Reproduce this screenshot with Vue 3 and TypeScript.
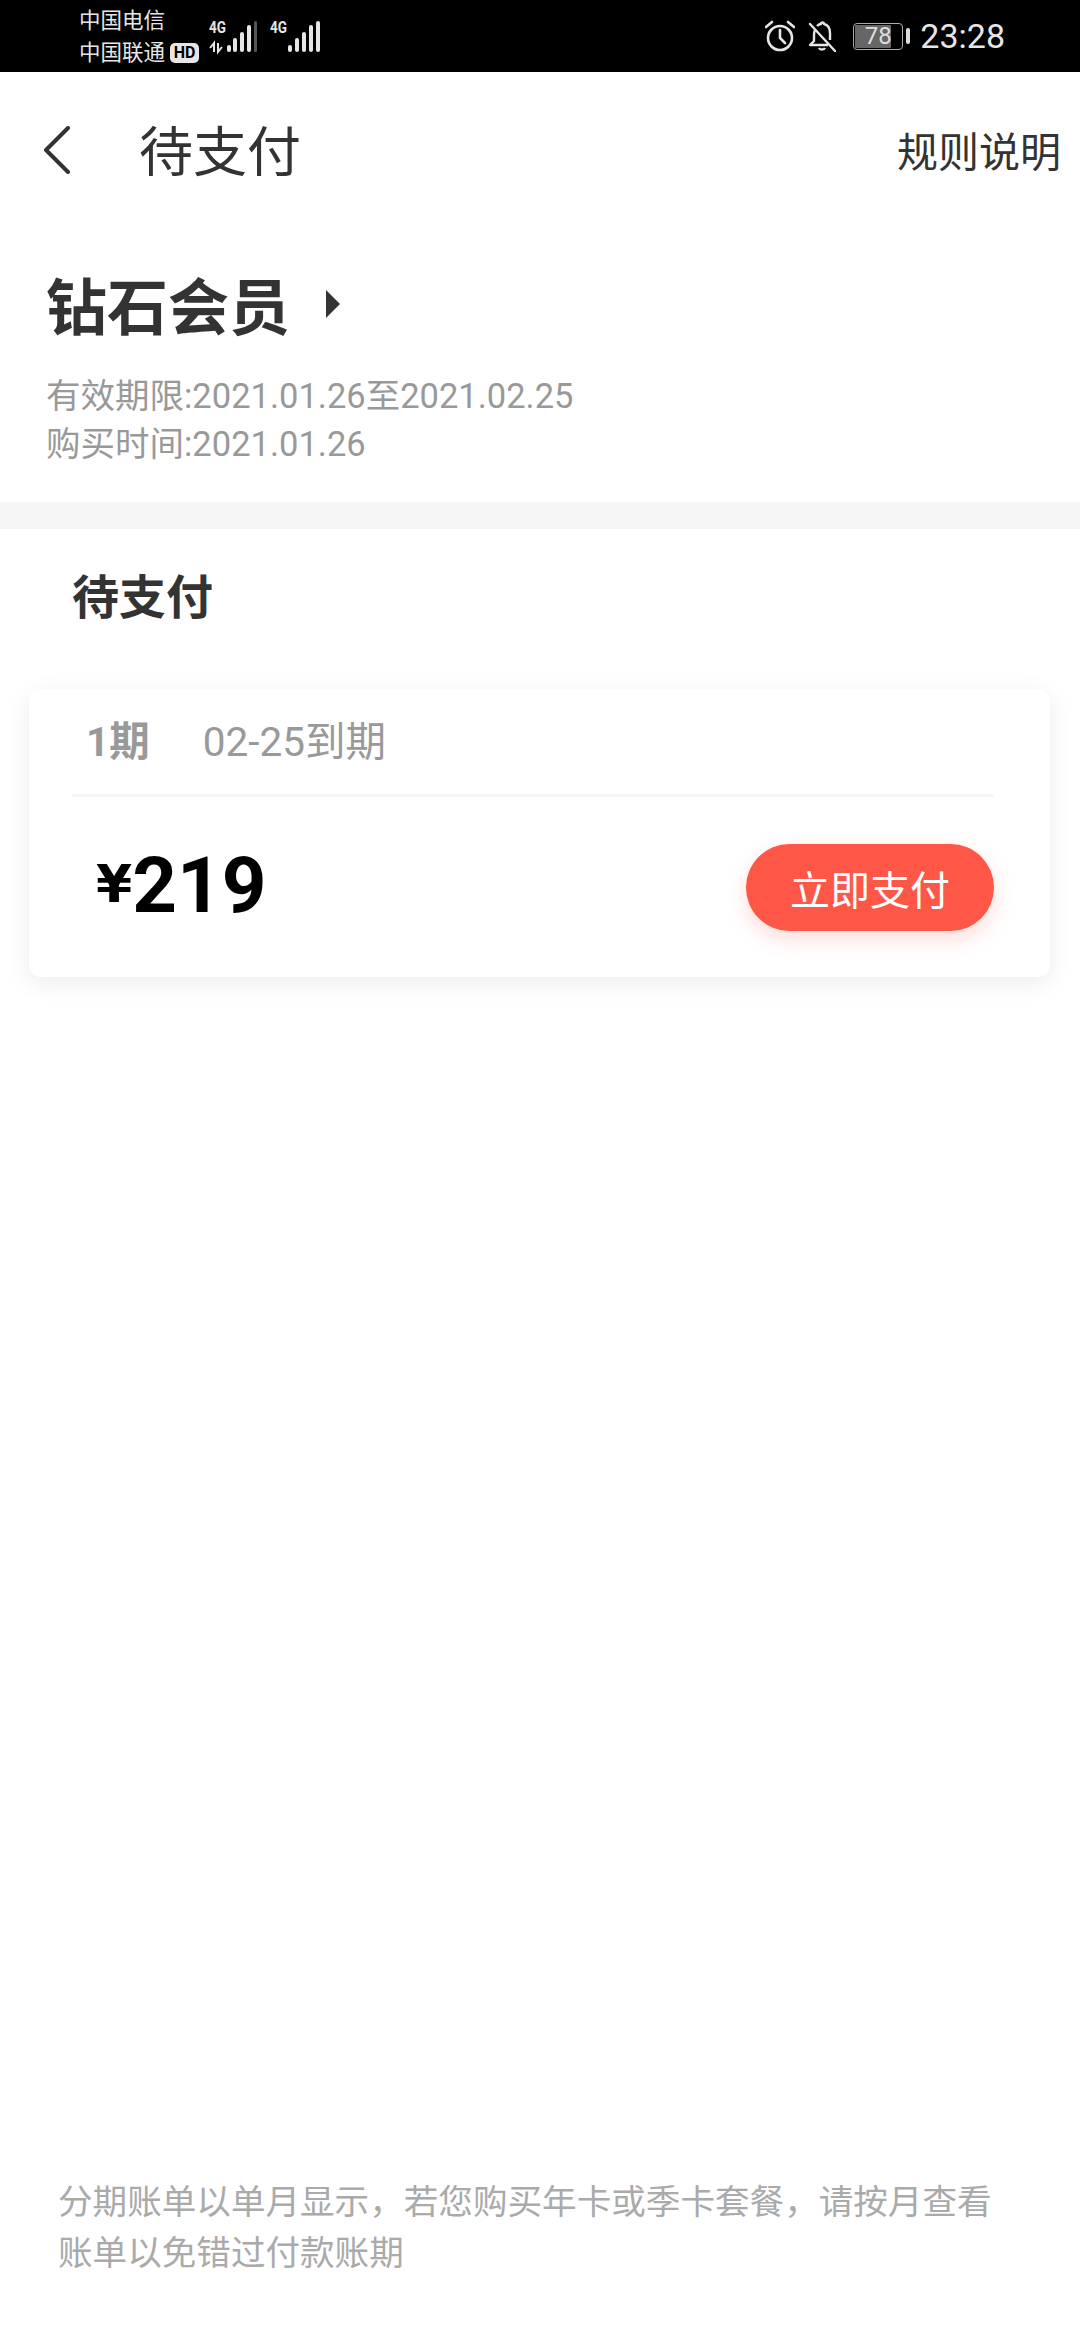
<template>
  <div class="page">
    <!-- Status bar -->
    <div class="status-bar">
      <div class="carriers">
        <span>中国电信</span>
        <span class="carrier-row">中国联通<em class="hd">HD</em></span>
      </div>
      <svg class="signal" width="48" height="44" viewBox="0 0 48 44">
        <text x="0" y="21" class="net" textLength="17" lengthAdjust="spacingAndGlyphs">4G</text>
        <path d="M5 40V31L1 36M9 31V40L13 35" class="arrows" />
        <rect x="18" y="33" width="4" height="7" rx="2" fill="#e6e6e6" />
        <rect x="24" y="26" width="4" height="14" rx="2" fill="#e6e6e6" />
        <rect x="31" y="20" width="4" height="20" rx="2" fill="#e6e6e6" />
        <rect x="38" y="13" width="4" height="27" rx="2" fill="#e6e6e6" />
        <rect x="45" y="9" width="3" height="31" rx="1.5" fill="#555" />
      </svg>
      <svg class="signal second" width="50" height="44" viewBox="0 0 50 44">
        <text x="0" y="21" class="net" textLength="17" lengthAdjust="spacingAndGlyphs">4G</text>
        <rect x="18" y="33" width="4" height="7" rx="2" fill="#e6e6e6" />
        <rect x="25" y="26" width="4" height="14" rx="2" fill="#e6e6e6" />
        <rect x="32" y="20" width="4" height="20" rx="2" fill="#e6e6e6" />
        <rect x="39" y="13" width="4" height="27" rx="2" fill="#e6e6e6" />
        <rect x="46" y="9" width="4" height="31" rx="2" fill="#e6e6e6" />
      </svg>

      <div class="status-right">
        <svg width="30" height="32" viewBox="0 0 30 32" fill="none" stroke="#e6e6e6" stroke-width="2.6">
          <circle cx="15" cy="18" r="12" />
          <path d="M15 10v8l5 5M1 7l6-5M29 7l-6-5" stroke-linecap="round" />
        </svg>
        <svg class="bell" width="28" height="32" viewBox="0 0 28 32" fill="none" stroke="#e6e6e6" stroke-width="2.4">
          <path d="M7 10c-1 2-1 3-1 5v6l-4 4h18M9 6c1-1 2-2 4-2 0-2 3-2 3 0 4 1 6 4 6 9v7" stroke-linejoin="round" />
          <path d="M11 28c1 2 5 2 6 0" />
          <path d="M2 4l25 27" stroke-linecap="round" />
        </svg>
        <div class="battery">
          <div class="battery-body">
            <div class="battery-fill" :style="{ width: battery + '%' }"></div>
            <span>{{ battery }}</span>
          </div>
          <i class="battery-cap"></i>
        </div>
        <span class="clock">23:28</span>
      </div>
    </div>

    <!-- Nav -->
    <div class="nav">
      <svg class="back" width="28" height="48" viewBox="0 0 28 48" fill="none" stroke="#333" stroke-width="4">
        <path d="M25 2L3 24l22 22" stroke-linecap="round" stroke-linejoin="round" />
      </svg>
      <h1>待支付</h1>
      <span class="rules">规则说明</span>
    </div>

    <!-- Membership -->
    <div class="member">
      <div class="member-title">
        <h2>{{ order.name }}</h2>
        <i class="triangle"></i>
      </div>
      <p>有效期限:{{ order.validFrom }}至{{ order.validTo }}</p>
      <p>购买时间:{{ order.boughtAt }}</p>
    </div>

    <div class="gap-bar"></div>

    <h3 class="section-title">待支付</h3>

    <div class="card" v-for="bill in bills" :key="bill.period">
      <div class="card-top">
        <strong>{{ bill.period }}期</strong>
        <span>{{ bill.due }}到期</span>
      </div>
      <div class="card-bottom">
        <div class="price"><small>¥</small>{{ bill.amount }}</div>
        <button class="pay-btn">立即支付</button>
      </div>
    </div>

    <p class="footnote">分期账单以单月显示，若您购买年卡或季卡套餐，请按月查看账单以免错过付款账期</p>
  </div>
</template>

<script setup lang="ts">
import { ref } from 'vue'

const battery = ref(78)

const order = ref({
  name: '钻石会员',
  validFrom: '2021.01.26',
  validTo: '2021.02.25',
  boughtAt: '2021.01.26'
})

const bills = ref([
  { period: 1, due: '02-25', amount: 219 }
])
</script>

<style>
html, body {
  margin: 0;
  background: #fff;
}
</style>

<style scoped>
.page {
  width: 1080px;
  height: 2340px;
  overflow: hidden;
  display: flex;
  flex-direction: column;
  background: #fff;
  font-family: Roboto, "Noto Sans CJK SC", sans-serif;
}

.status-bar {
  height: 72px;
  flex: none;
  box-sizing: border-box;
  padding: 0 75px 0 79px;
  background: #000;
  color: #e6e6e6;
  display: flex;
  align-items: center;
}

.carriers {
  display: flex;
  flex-direction: column;
  font-size: 21.5px;
  line-height: 32px;
  margin-top: 1px;
}

.carrier-row {
  display: flex;
  align-items: center;
}

.hd {
  margin-left: 5px;
  width: 29px;
  height: 20px;
  line-height: 20px;
  border-radius: 5px;
  background: #e6e6e6;
  color: #000;
  font-size: 16px;
  font-weight: 700;
  font-style: normal;
  text-align: center;
}

.signal {
  margin-left: 10px;
  margin-bottom: 4px;
}

.signal.second {
  margin-left: 13px;
}

.net {
  font-family: Roboto, sans-serif;
  font-size: 16px;
  font-weight: 700;
  fill: #e6e6e6;
}

.arrows {
  fill: none;
  stroke: #e6e6e6;
  stroke-width: 2;
}

.status-right {
  margin-left: auto;
  display: flex;
  align-items: center;
}

.bell {
  margin-left: 13px;
}

.battery {
  margin-left: 17px;
  display: flex;
  align-items: center;
}

.battery-body {
  position: relative;
  width: 50px;
  height: 27px;
  box-sizing: border-box;
  border: 1.5px solid #aaa;
  border-radius: 4px;
  padding: 1px;
}

.battery-fill {
  height: 100%;
  background: #666;
  border-radius: 1px;
}

.battery-body span {
  position: absolute;
  inset: 0;
  text-align: center;
  font-size: 24px;
  line-height: 24px;
  color: #ddd;
}

.battery-cap {
  margin-left: 3px;
  width: 4px;
  height: 16px;
  border-radius: 2px;
  background: #ddd;
}

.clock {
  margin-left: 10px;
  font-size: 34px;
  color: #e6e6e6;
}

.nav {
  height: 156px;
  flex: none;
  box-sizing: border-box;
  padding: 0 19px 0 43px;
  display: flex;
  align-items: center;
}

.nav h1 {
  margin: 0 0 3px 68px;
  font-size: 54px;
  font-weight: 400;
  color: #333;
}

.rules {
  margin: 0 0 3px auto;
  font-size: 41px;
  color: #333;
}

.member {
  padding: 36px 0 34px 46px;
}

.member-title {
  display: flex;
  align-items: center;
  height: 84px;
  margin-bottom: 24px;
}

.member-title h2 {
  margin: 0 0 5px;
  font-size: 61px;
  font-weight: 700;
  color: #333;
}

.triangle {
  margin: 0 0 5px 36px;
  border-left: 14px solid #333;
  border-top: 14px solid transparent;
  border-bottom: 14px solid transparent;
}

.member p {
  margin: 0;
  font-size: 34.5px;
  line-height: 48px;
  color: #999;
}

.gap-bar {
  height: 27px;
  flex: none;
  background: #f5f5f5;
}

.section-title {
  margin: 39px 0 61px 72px;
  font-size: 47px;
  line-height: 60px;
  font-weight: 700;
  color: #333;
}

.card {
  margin: 0 30px 0 29px;
  height: 288px;
  flex: none;
  box-sizing: border-box;
  padding: 0 56px 0 43px;
  background: #fff;
  border-radius: 12px;
  box-shadow: 0 6px 24px rgba(0, 0, 0, 0.08);
}

.card-top {
  height: 108px;
  box-sizing: border-box;
  padding: 0 0 6px 14px;
  border-bottom: 3px solid #f5f5f5;
  display: flex;
  align-items: center;
  color: #999;
  font-size: 40.5px;
}

.card-top strong {
  font-weight: 700;
  margin-right: 53px;
}

.card-bottom {
  padding-top: 47px;
  display: flex;
  justify-content: space-between;
  align-items: flex-start;
}

.price {
  padding-left: 24px;
  font-size: 78px;
  line-height: 83px;
  font-weight: 700;
  color: #000;
}

.price small {
  font-family: "DejaVu Sans", sans-serif;
  font-size: 52px;
  line-height: 0;
  vertical-align: 10px;
}

.pay-btn {
  width: 248px;
  height: 87px;
  padding: 0;
  border: none;
  border-radius: 44px;
  background: #ff5747;
  color: #fff;
  font-family: inherit;
  font-size: 40px;
  box-shadow: 0 8px 20px rgba(255, 87, 71, 0.22);
}

.footnote {
  margin: auto 80px 61px 58px;
  font-size: 34.6px;
  line-height: 51px;
  color: #aaa;
}
</style>
